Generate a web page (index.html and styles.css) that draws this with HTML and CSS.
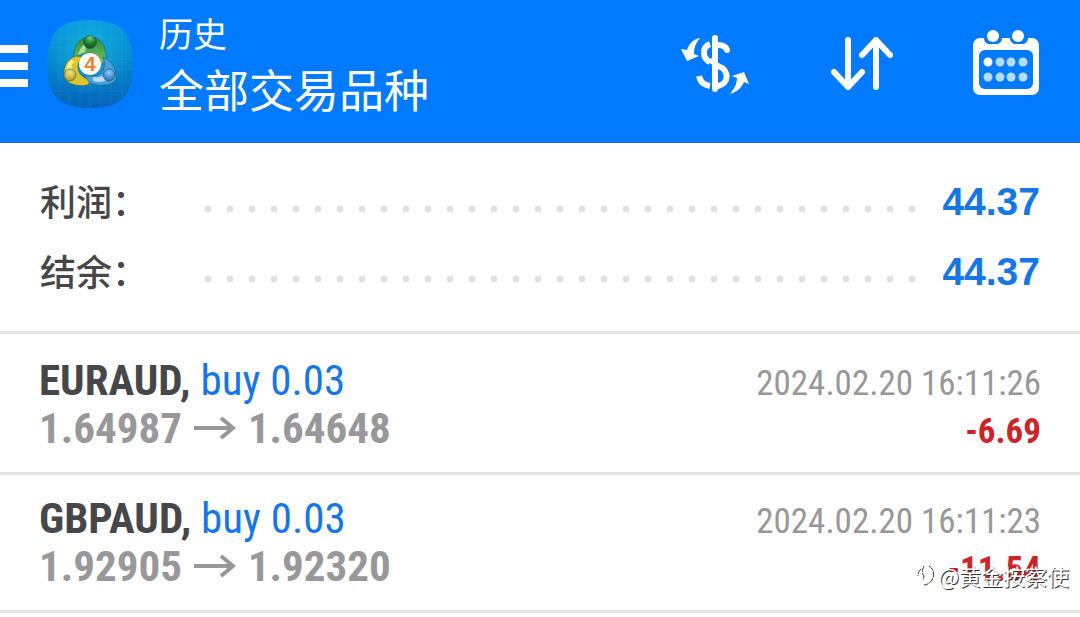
FILE: index.html
```
<!DOCTYPE html>
<html lang="zh-CN">
<head>
  <meta charset="UTF-8">
  <meta name="viewport" content="width=device-width, initial-scale=1">
  <title>历史</title>
  <link rel="stylesheet" href="styles.css">
</head>
<body>
  <header class="topbar">
    <button type="button" class="menu-btn" aria-label="菜单">
      <span></span>
      <span></span>
      <span></span>
    </button>
    <svg class="logo" viewBox="0 0 86 88" aria-hidden="true">
      <defs>
        <linearGradient id="logo-bg" x1="0" y1="0" x2="0" y2="1">
          <stop offset="0" stop-color="#0598e6"/>
          <stop offset=".5" stop-color="#0585cc"/>
          <stop offset="1" stop-color="#0562b8"/>
        </linearGradient>
        <radialGradient id="logo-glow" cx=".5" cy=".35" r=".5">
          <stop offset="0" stop-color="#18b8d4" stop-opacity=".8"/>
          <stop offset="1" stop-color="#18b8d4" stop-opacity="0"/>
        </radialGradient>
        <linearGradient id="green" x1="0" y1="0" x2="0" y2="1">
          <stop offset="0" stop-color="#2e8f3a"/>
          <stop offset="1" stop-color="#7cc66b"/>
        </linearGradient>
        <radialGradient id="green-ball" cx=".5" cy=".2" r=".8">
          <stop offset="0" stop-color="#7cc878"/>
          <stop offset=".5" stop-color="#1f8030"/>
          <stop offset="1" stop-color="#0d5220"/>
        </radialGradient>
        <radialGradient id="yellow-ball" cx=".5" cy=".3" r=".8">
          <stop offset="0" stop-color="#f6e67a"/>
          <stop offset="1" stop-color="#a98b10"/>
        </radialGradient>
        <radialGradient id="blue-ball" cx=".5" cy=".3" r=".8">
          <stop offset="0" stop-color="#8fd0f5"/>
          <stop offset="1" stop-color="#0f5ba8"/>
        </radialGradient>
      </defs>
      <path fill="url(#logo-bg)" d="M43 0C74 0 86 12 86 44S74 88 43 88 0 76 0 44 12 0 43 0z"/>
      <path fill="url(#logo-glow)" d="M43 0C74 0 86 12 86 44S74 88 43 88 0 76 0 44 12 0 43 0z"/>
      <path stroke="#5fd0f5" stroke-opacity=".14" fill="none" d="M12 10v68M22 4v80M33 1v86M43 0v88M54 1v86M64 4v80M75 10v68M6 17h74M2 28h82M0 39h86M0 49h86M1 60h84M6 71h74"/>
      <g stroke="#0b4a70" stroke-width=".8" stroke-opacity=".6">
        <path fill="url(#green)" d="M27 38C26 25 33 17 43 17s17 8 16 22l-5 7c-1-8-5-13-11-13s-10 2-16 5z"/>
        <path fill="#dcc52e" d="M29 36c-10 3-13 12-12 21 4 8 15 10 24 8l3-5c-9-2-13-7-13-13s3-8 5-10z"/>
        <path fill="#4aa0dc" d="M56 37c9 4 14 12 13 23-6 6-18 7-27 2l-5-7c9 2 15 1 18-3s3-9 1-15z"/>
        <path fill="#a8dc92" stroke="none" d="M31 35c2-8 6-11 9-11l-2 8z"/>
        <path fill="#f7ec8e" stroke="none" d="M24 40c-4 3-5 8-4 13l5-3c-1-4 0-7 3-9z"/>
        <path fill="#b5e0f8" stroke="none" d="M46 61c7 2 12 1 16-3l-5-3c-3 2-7 3-11 2z"/>
        <circle cx="43" cy="22" r="6.500" fill="url(#green-ball)"/>
        <circle cx="23" cy="55" r="6" fill="url(#yellow-ball)"/>
        <circle cx="62" cy="55" r="6" fill="url(#blue-ball)"/>
      </g>
      <circle cx="43" cy="44" r="11" fill="#fff8f3"/>
      <text class="logo-digit" x="43" y="51" text-anchor="middle">4</text>
    </svg>
    <div class="titles">
      <div class="screen-name">历史</div>
      <h1>全部交易品种</h1>
    </div>
    <nav class="actions">
      <button type="button" aria-label="交易品种">
        <svg width="70" height="62" viewBox="0 0 70 62">
          <g fill="none" stroke="#fff" stroke-linecap="round">
            <path stroke-width="6" d="M34 5v51"/>
            <path stroke-width="6" stroke-linecap="butt" d="M29 11c-8 3-8 14 0 18M18 43c1 6 5 9 11 10"/>
            <path stroke-width="6" d="M37 12c5 0 8 2 9 5M37 33c12 4 11 18 0 20"/>
            <path stroke-width="5" d="M30 28l9 6"/>
          </g>
          <path fill="#fff" d="M19 5C12 6 8 11 6 17L0 16l6 12 12-5-5-2c0-7 2-11 6-16z"/>
          <path fill="#fff" d="M49 61c7-2 12-7 14-12l5 2-5-12-12 4 5 2c0 6-3 11-7 16z"/>
        </svg>
      </button>
      <button type="button" aria-label="排序">
        <svg width="62" height="54" viewBox="0 0 62 54" fill="none" stroke="#fff" stroke-width="6" stroke-linecap="round" stroke-linejoin="round">
          <path d="M17 3v47M3 35l14 15 14-15"/>
          <path d="M45 50V3M31 18L45 3l14 15"/>
        </svg>
      </button>
      <button type="button" aria-label="选择日期">
        <svg width="66" height="68" viewBox="0 0 66 68">
          <rect y="8" width="66" height="57" rx="7" fill="#fff"/>
          <path fill="#007aff" d="M11 7h18v1c0 4-3 6-6 6h-6c-3 0-6-2-6-6zM37 7h18v1c0 4-3 6-6 6h-6c-3 0-6-2-6-6z"/>
          <rect x="6" y="20" width="54" height="39" rx="6" fill="#007aff"/>
          <circle cx="20" cy="6" r="6" fill="#fff"/>
          <circle cx="45" cy="6" r="6" fill="#fff"/>
          <circle cx="15" cy="32" r="4.500" fill="#fff"/>
          <g fill="#b3dcff">
            <circle cx="27" cy="32" r="4.500"/>
            <circle cx="38" cy="32" r="4.500"/>
            <circle cx="50" cy="32" r="4.500"/>
            <circle cx="15" cy="47" r="4.500"/>
            <circle cx="27" cy="47" r="4.500"/>
            <circle cx="38" cy="47" r="4.500"/>
            <circle cx="50" cy="47" r="4.500"/>
          </g>
        </svg>
      </button>
    </nav>
  </header>

  <main>
    <dl class="summary">
      <div class="summary-row">
        <dt>利润：</dt>
        <dd>44.37</dd>
      </div>
      <div class="summary-row">
        <dt>结余：</dt>
        <dd>44.37</dd>
      </div>
    </dl>

    <ul class="deals">
      <li class="deal">
        <div class="line">
          <div class="symbol"><b>EURAUD,</b> <span class="side">buy 0.03</span></div>
          <time>2024.02.20 16:11:26</time>
        </div>
        <div class="line">
          <div class="prices">
            <span>1.64987</span>
            <svg class="arrow" viewBox="0 0 42 24"><path d="M0 12h38M27 2l12 10-12 10"/></svg>
            <span>1.64648</span>
          </div>
          <div class="loss">-6.69</div>
        </div>
      </li>
      <li class="deal">
        <div class="line">
          <div class="symbol"><b>GBPAUD,</b> <span class="side">buy 0.03</span></div>
          <time>2024.02.20 16:11:23</time>
        </div>
        <div class="line">
          <div class="prices">
            <span>1.92905</span>
            <svg class="arrow" viewBox="0 0 42 24"><path d="M0 12h38M27 2l12 10-12 10"/></svg>
            <span>1.92320</span>
          </div>
          <div class="loss">-11.54</div>
        </div>
        <div class="watermark">
          <svg width="20" height="24" viewBox="0 0 20 24" fill="none" stroke="#333">
            <path d="M5 6C3 8 2 10 2 13M8 3C6 7 6 11 8 13l-1 4M13 3c5 3 6 9 3 14-2 3-5 5-8 5" stroke-dasharray="6 1"/>
          </svg>
          <span>@黄金按察使</span>
        </div>
      </li>
    </ul>
  </main>
</body>
</html>
```
FILE: styles.css
```
* {
  box-sizing: border-box;
}
body {
  margin: 0;
  background: #fff;
  color: #47474a;
  font-family: "Roboto Condensed", "Liberation Sans Narrow", Roboto, "Noto Sans CJK SC", sans-serif;
}
button {
  padding: 0;
  border: none;
  background: none;
  cursor: pointer;
}
svg {
  display: block;
}

/* header */
.topbar {
  display: flex;
  align-items: flex-start;
  min-height: 143px;
  padding: 10px 41px 0 0;
  background: #007aff;
  border-bottom: 1px solid #2a6bb5;
  color: #fff;
}
.menu-btn {
  display: flex;
  flex-direction: column;
  gap: 9px;
  width: 28px;
  margin-top: 35px;
}
.menu-btn span {
  width: 100%;
  height: 8px;
  background: #fff;
}
.logo {
  width: 86px;
  height: 88px;
  margin: 10px 26px 0 19px;
}
.logo-digit {
  font: bold 20px "Liberation Sans", sans-serif;
  fill: #ee8130;
}
.titles {
  flex: 1;
  font-family: "Noto Sans CJK SC", sans-serif;
  white-space: nowrap;
}
.screen-name {
  font-size: 34px;
  line-height: 46px;
}
h1 {
  margin: 0;
  font-size: 45px;
  font-weight: 400;
  line-height: 66px;
}
.actions {
  display: flex;
  align-items: center;
  gap: 80px;
  height: 108px;
}

/* totals */
.summary {
  margin: 0;
  padding: 24px 40px;
  border-bottom: 3px solid #e4e4e4;
}
.summary-row {
  display: flex;
  align-items: center;
  height: 70px;
}
.summary-row::before {
  content: "";
  order: 1;
  flex: 1;
  height: 8px;
  margin: 14px 20px 0 0;
  background: radial-gradient(circle, #e2e2e4 3px, transparent 4px) 0 0 / 22px 8px repeat-x;
}
.summary dt {
  width: 157px;
  padding-bottom: 4px;
  font-family: "Noto Sans CJK SC", sans-serif;
  font-size: 36px;
  font-weight: 500;
}
.summary dd {
  order: 2;
  margin: 0;
  color: #1577e6;
  font: bold 39px "Liberation Sans", sans-serif;
}

/* deals */
.deals {
  margin: 0;
  padding: 3px 0 0;
  list-style: none;
}
.deal {
  position: relative;
  padding: 19px 39px 20px;
  border-bottom: 3px solid #e4e4e4;
}
.line {
  display: flex;
  align-items: center;
  justify-content: space-between;
  height: 48px;
  white-space: nowrap;
}
.symbol {
  font-size: 43px;
}
.side {
  color: #1577e6;
}
time {
  padding-top: 6px;
  color: #98989a;
  font-size: 35px;
}
.prices {
  display: flex;
  align-items: center;
  gap: 12px;
  color: #98989a;
  font-size: 43px;
  font-weight: 700;
}
.arrow {
  width: 42px;
  height: 24px;
  fill: none;
  stroke: #98989a;
  stroke-width: 4;
}
.loss {
  padding-top: 6px;
  color: #cc2429;
  font-size: 35px;
  font-weight: 700;
}
.watermark {
  position: absolute;
  right: 11px;
  bottom: 20px;
  display: flex;
  align-items: center;
  gap: 2px;
  color: #fff;
  font: 22px/30px "Noto Sans CJK SC", sans-serif;
  text-shadow: 1px 1px 0 #333;
}
```
